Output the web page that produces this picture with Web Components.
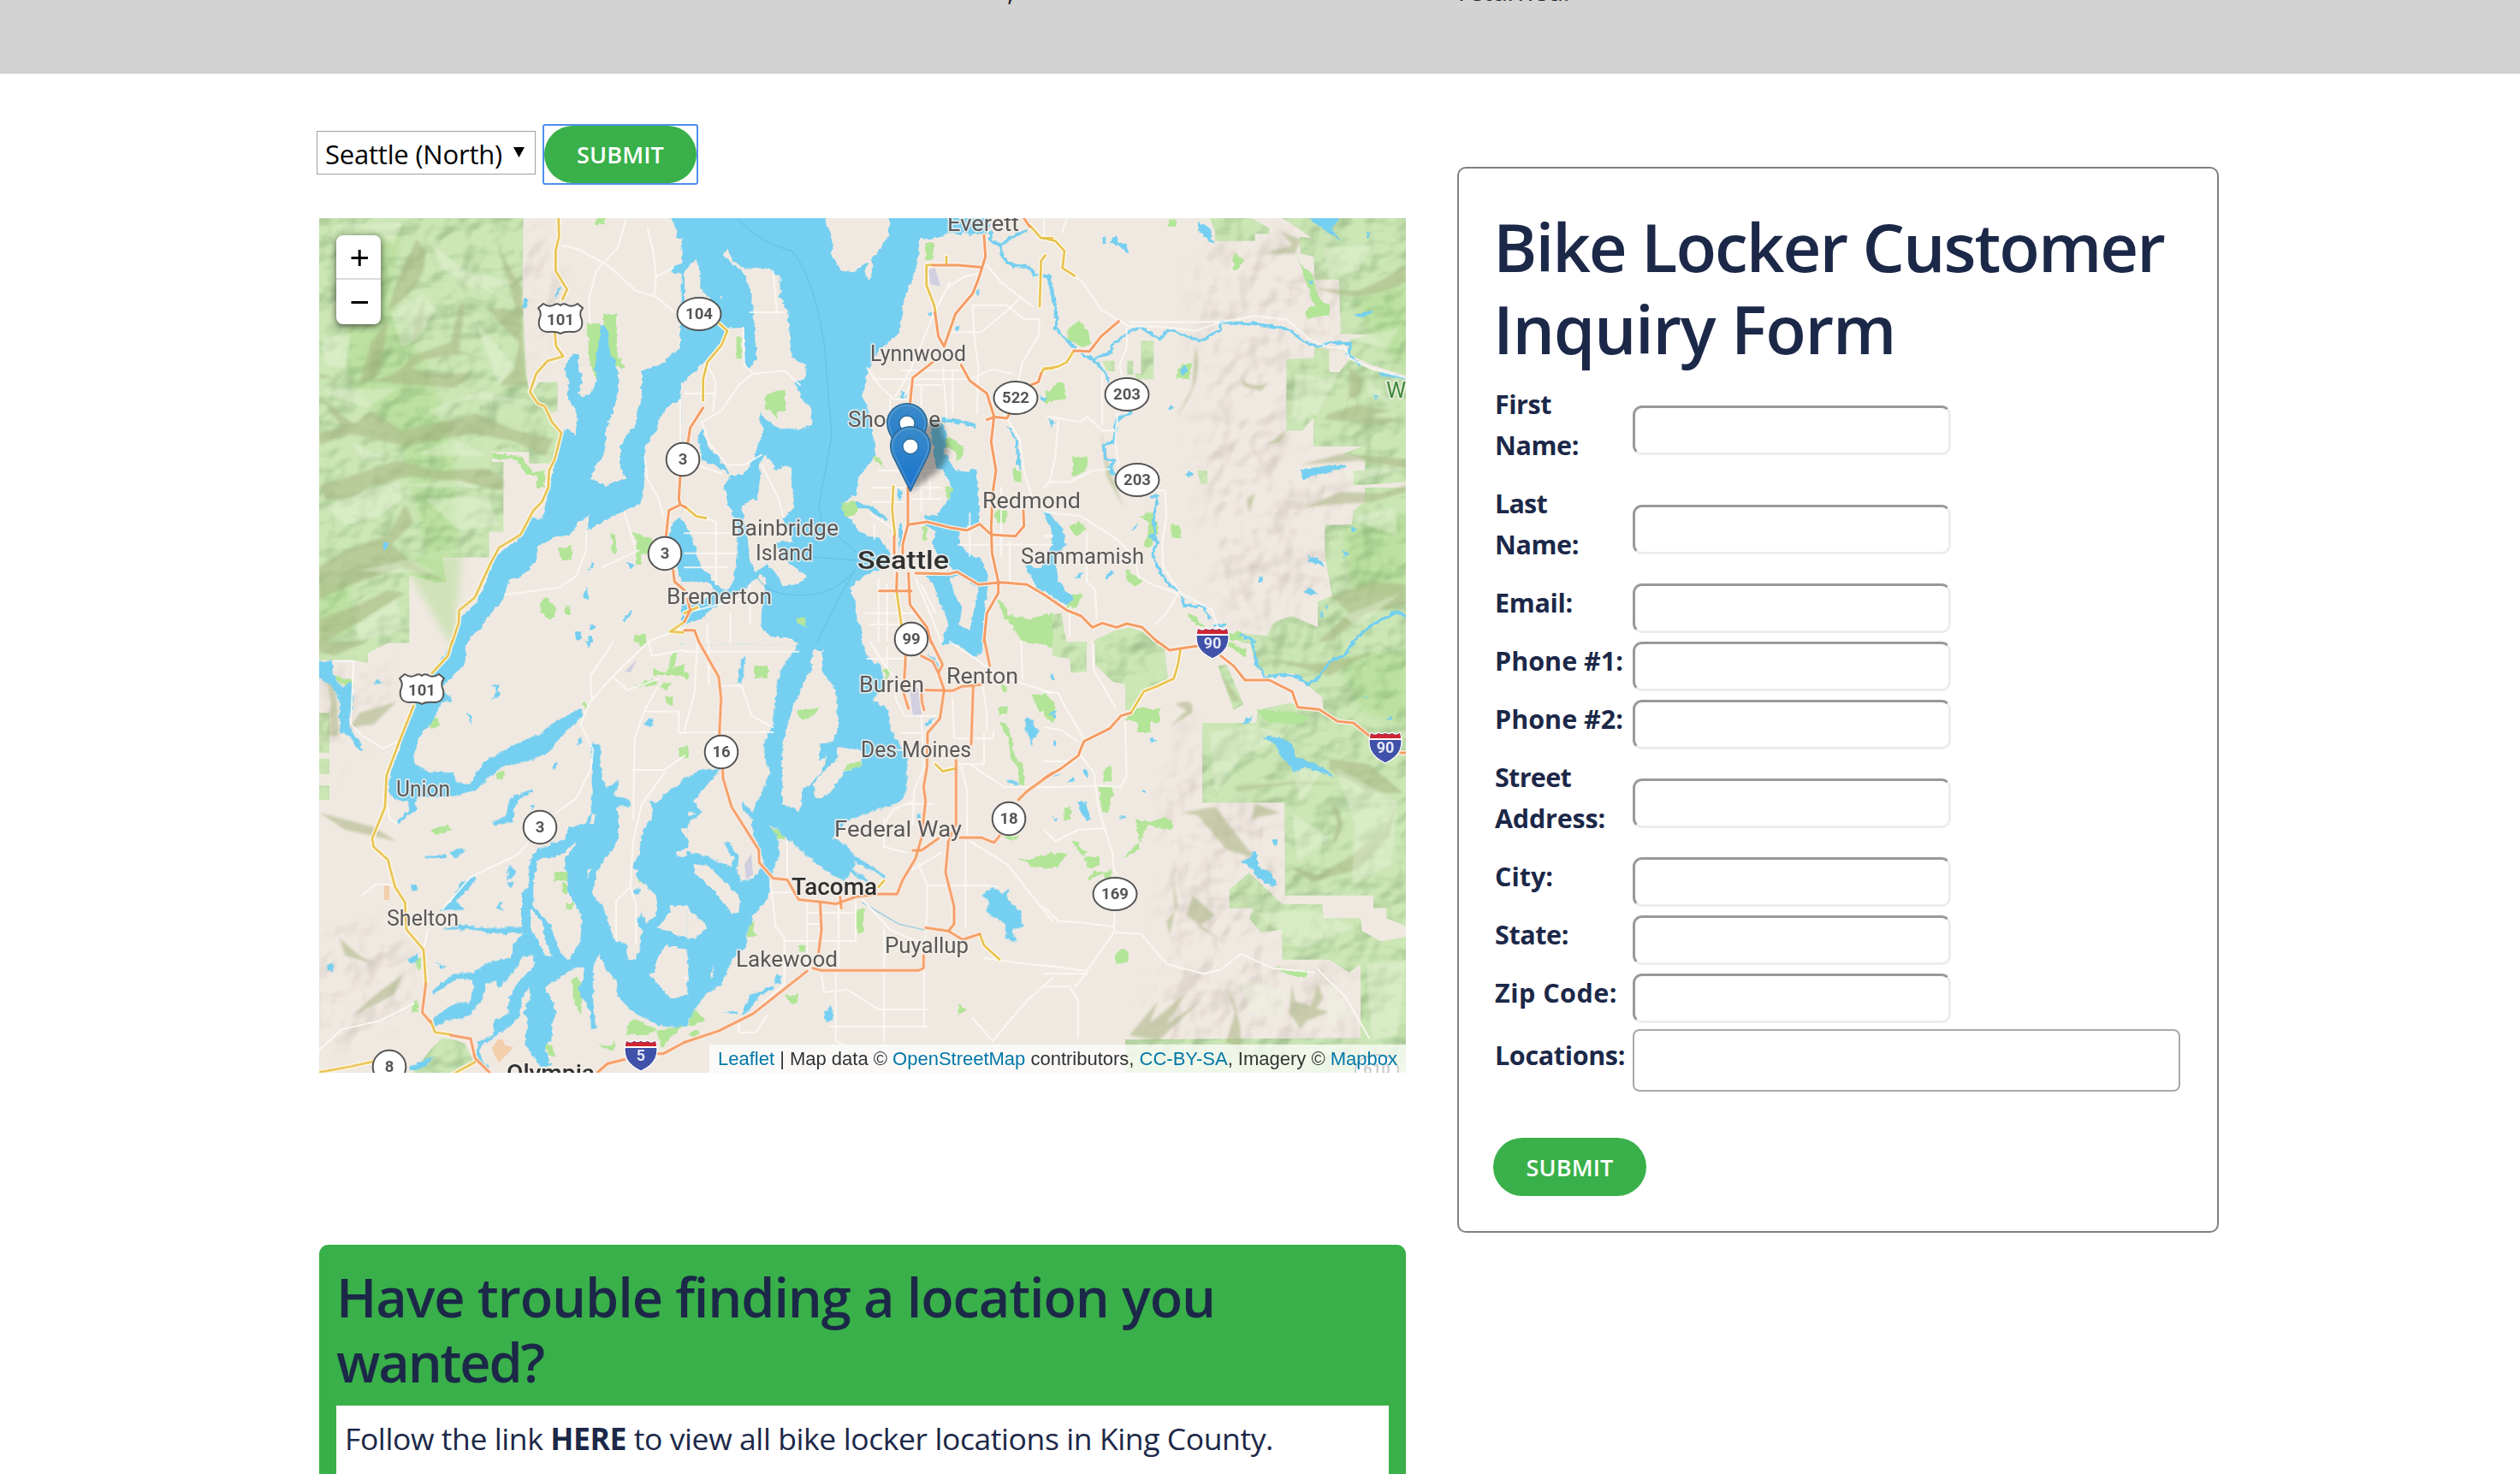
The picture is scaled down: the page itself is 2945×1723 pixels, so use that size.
<!DOCTYPE html>
<html lang="en">
<head>
<meta charset="utf-8">
<title>Bike Lockers</title>
<style>
html,body{margin:0;padding:0;background:#fff}
body{width:2945px;height:1723px;overflow:hidden;font-family:"Open Sans","Noto Sans",sans-serif;color:#1c2848}
</style>
</head>
<body>
<locker-page></locker-page>
<script>
const define=(name,html,setup)=>customElements.define(name,class extends HTMLElement{
  constructor(){super();this.attachShadow({mode:'open'}).innerHTML=html;}
  connectedCallback(){if(setup)setup(this,this.shadowRoot);}
});

/* Text whose letter spacing is adjusted to fill a given width. */
define('fit-text','<style>:host{display:inline-block;white-space:pre}span{display:inline-block}</style><span><slot></slot></span>',(el,root)=>{
  const s=root.querySelector('span'),w=+el.getAttribute('width');
  const natural=s.getBoundingClientRect().width,n=el.textContent.length;
  s.style.letterSpacing=((w-natural)/n)+'px';
});

define('pill-button',`<style>
:host{display:block;border:2px solid transparent;width:178px;height:67px}
:host([focused]){border-color:#4d90ee;border-radius:3px}
button{all:unset;box-sizing:border-box;display:flex;align-items:center;justify-content:center;width:100%;height:100%;border-radius:34px;background:#39b049;color:#fff;font:600 27px/36px "Open Sans";padding-top:1px}
</style><button><fit-text width="102">SUBMIT</fit-text></button>`);

define('location-select',`<style>
:host{display:flex;box-sizing:border-box;width:256px;height:51px;border:1px solid #a0a0a0;padding:0 12px 0 9px;align-items:center;justify-content:space-between;color:#000;font-size:31px;line-height:48px}
svg{display:block;margin-bottom:1px}
fit-text{padding-top:2px}
</style><fit-text width="207">Seattle (North)</fit-text><svg width="13" height="12"><path d="M0 0h13L6.500 12z"/></svg>`);

define('top-band',`<style>
:host{display:block;height:86px;background:#d3d3d3;overflow:hidden;box-sizing:border-box;border-bottom:1px solid #c9c9c9;color:#212529;font-size:31px;line-height:46px}
div{display:flex;margin-top:-34px}
i{font-style:normal;width:527px;margin-left:1177px}
</style><div><i>,</i><fit-text width="130">returned.</fit-text></div>`);

define('form-row',`<style>
:host{display:flex;height:68px;align-items:center}
:host([lines="2"]){height:116px}
label{display:block;width:161px;font-size:30.500px;line-height:48px;font-weight:700;white-space:nowrap;padding-bottom:14px;box-sizing:border-box}
input{all:unset;box-sizing:border-box;width:372px;height:58px;border:3px solid;border-color:#999 #ededed #ededed #999;border-radius:11px;background:#fff}
:host([wide]){height:77px}
:host([wide]) input{width:640px;height:73px;border:2px solid #a9a9a9;border-radius:8px}
:host([wide]) label{padding-bottom:14px}
</style><label></label><input>`,(el,root)=>{
  const parts=el.getAttribute('label').split('|');
  root.querySelector('label').innerHTML=parts.map(p=>{const [t,w]=p.split('@');return `<div><fit-text width="${w}">${t}</fit-text></div>`}).join('');
});

define('inquiry-form',`<style>
:host{display:block;box-sizing:border-box;width:890px;height:1246px;border:2px solid #808080;border-radius:10px;padding:43px 40px 0 42px}
h1{margin:0 0 10px -2px;font-size:78px;line-height:96px;font-weight:600;height:195px}
pill-button{margin:50px 0 0 -4px;width:179px;height:68px}
</style>
<h1><fit-text width="784">Bike Locker Customer</fit-text><br><fit-text width="470">Inquiry Form</fit-text></h1>
<div>
<form-row lines="2" label="First@66|Name:@98"></form-row>
<form-row lines="2" label="Last@61|Name:@98"></form-row>
<form-row label="Email:@91"></form-row>
<form-row label="Phone #1:@150"></form-row>
<form-row label="Phone #2:@150"></form-row>
<form-row lines="2" label="Street@89|Address:@129"></form-row>
<form-row label="City:@68"></form-row>
<form-row label="State:@86"></form-row>
<form-row label="Zip Code:@143"></form-row>
<form-row wide label="Locations:@152"></form-row>
</div><pill-button></pill-button>`);

define('help-panel',`<style>
:host{display:block;box-sizing:border-box;width:1270px;height:330px;background:#39b049;border-radius:11px 11px 0 0;padding:23px 20px 0}
h2{margin:0;font-size:63px;line-height:76px;font-weight:600;height:165px}
p{margin:0;background:#fff;height:150px;padding:12px 10px;font-size:35.500px;line-height:53px}
</style><h2><fit-text width="1027">Have trouble finding a location you</fit-text><br><fit-text width="242">wanted?</fit-text></h2>
<p><fit-text width="1085">Follow the link <b>HERE</b> to view all bike locker locations in King County.</fit-text></p>`);

define('zoom-control',`<style>
:host{display:block;position:absolute;left:20px;top:20px;width:52px;height:104px;border-radius:8px;background:#fff;box-shadow:0 2px 9px rgba(0,0,0,.65)}
svg{display:block}
</style><svg width="52" height="104"><path d="M0 51h52" stroke="#ccc" stroke-width="1.500"/><path d="M17.500 26.500h19.500M27.200 17v19M17.500 78.500h19.500" stroke="#000" stroke-width="3" fill="none"/></svg>`);

define('map-credit',`<style>
:host{display:flex;justify-content:flex-end;box-sizing:border-box;position:absolute;right:0;bottom:0;height:33px;width:814px;background:rgba(255,255,255,.72);padding:1px 10px 0 0;font:22px/32px "Liberation Sans",sans-serif;color:#333}
a{color:#0078a8}
</style><fit-text width="794"><a>Leaflet</a> | Map data © <a>OpenStreetMap</a> contributors, <a>CC-BY-SA</a>, Imagery © <a>Mapbox</a></fit-text>`);

/* Map geometry, in six tiles at three units to the pixel. */
const origin={A:[370,250],B:[800,250],C:[1220,250],D:[370,750],E:[800,750],F:[1220,750]};
const forest={
A:"M0,0H725L722,300 735,560 748,640 780,590H845V690L820,700 855,768 835,875H745V835H615V870H655V1115H605V1205H440L455,1290 420,1295 325,1265V1505H0Z",
D:"M0,0H260L180,40V75L130,65H0ZM0,250H45V390H0ZM0,410H45V465H0ZM0,505H45V555H0ZM400,1430L440,1390 480,1395 520,1410 550,1470 450,1520H330Z",
C:"M580,10L600,60 600,95H740V70H790V50L720,10ZM830,10H1275V570L1150,530 1065,490 1075,440 1140,425 1040,420 1035,230H950L945,150 900,140 895,80 940,85ZM850,510L945,505 950,465 1000,475V555H1035L1070,510 1150,545 1275,580V960H1125V860L1050,840 1120,815H945V715L905,760H850ZM1275,940L1125,950V1010L1085,1040 1080,1090H985V1200L1010,1340 960,1360V1450L870,1410 810,1430 780,1480 690,1470V1505H1275ZM0,1410L60,1400 80,1505H0ZM185,1490L250,1460 300,1450 345,1465 390,1505H170ZM1085,900H1130V950H1085ZM340,445H385V580H320V560H340ZM205,515H247V552H220ZM292,515H313V565H292ZM538,900H573V948H550Z",
F:"M30,0H150V105L95,110 90,60 30,50ZM180,0H420L435,130 350,170 300,240H285V150L240,140 180,80ZM720,0H1275V1000L1200,970V935H1155V890H845L843,565H555V285H745L750,240 860,215 980,240 975,195 870,110 790,125 745,90ZM650,870L720,810 835,920H975L980,970H1110L1115,1015 1180,1050 1275,1035V1510H1140L1110,1415V1130L1070,1160 1000,1115H835V1010L760,1020 720,970 735,935H650ZM285,1395L1110,1390V1520H285ZM610,85L640,80 700,220 665,240Z"};
const park={
A:"M980,15h32v22h-32ZM1005,350h48v140l30,55-30,-10-40,-60ZM947,385h50v150l-15,45-25,-50ZM615,840l100,10 45,55 40,-5v60h-30v-40l-40,-10-30,-50h-85ZM1100,1115l75,20v60h-38v35h-17v-90ZM845,1175l50,-15v55h-35ZM785,1350l20,-5 40,45-25,35-35,-30ZM1115,1475h40v25h-40ZM870,1375h20v30h-20ZM1035,1110l18,40-5,50-15,-20Z",
B:"M845,100l30,5-5,55h-25ZM182,430h18v78h-18ZM285,630l68,-15v75l-25,5-5,25-12,-25-30,-10ZM545,1020l50,-15 15,40-40,20ZM660,860l20,-10 20,40ZM915,785l30,5 40,40-30,40-5,-40-35,-10ZM1150,895l30,5 5,45-30,-10ZM915,955l28,5-10,35h-15ZM1090,1040h40v42h-40ZM1265,620h25v40h-25ZM388,1415h40l-10,35ZM130,1455l25,-5v40h-25ZM1190,1430l60,-20 40,-10v100h-105l-50,-75ZM1095,1350l20,5 20,50 80,20-20,10-70,-10ZM835,1095h15v50h-15Z",
C:"M435,20h30v25h-30ZM665,135l40,25-30,35h-12ZM885,130l15,50 40,30 20,80 40,30v35l-80,10v-35l30,-10-50,-130ZM85,400l35,-25 30,30 15,50-30,10-50,-20ZM480,530l35,-5-5,55-50,-5ZM20,620l35,-35 20,15v45l-65,15ZM100,850h52l-5,50-45,25ZM90,1095l30,-15 32,20-40,35ZM443,1090h35v45h-30ZM290,1245l55,45-25,15-30,-20ZM335,1060l45,-15 25,60-35,70-20,-10 20,-80ZM500,1400l30,10 35,40-35,-10ZM650,1470l45,-5v30h-45ZM100,1340l35,-10-20,50-40,5Z",
D:"M55,120l70,15v30h-20l-15,-15ZM390,290l10,-20 25,-3 3,30-25,10ZM628,465l28,-15v33h-25ZM400,660l60,-20 12,20-55,18ZM835,808h45v30h-45ZM860,840l20,15v30h-20ZM875,915h25v22h-25ZM1115,0h45l-20,20ZM1115,160l60,-30 20,15-25,15ZM1180,95l50,15 15,-65 20,-10-15,60 40,-15v40h-110ZM1205,150l45,-10-25,35ZM1222,190h25v40l-20,-15ZM1270,370l20,-5v45l-20,-10ZM345,1110h20v45l-20,-20ZM335,1280l20,-25v45h-20ZM1085,1350l30,-30 75,40-30,20h-70ZM990,1410l40,10 15,-25v40l-30,-5ZM800,1415h30l5,40h-20ZM895,1190l20,-15 20,40-10,90-20,-30ZM1190,1365l100,-20-50,40-30,40ZM1130,830h28v17h-28ZM930,220l20,-10-5,30Z",
E:"M245,82h46v46h-46ZM0,105h12v25h-12ZM0,365h14v40h-14ZM390,240l80,-10-10,25-45,20ZM700,95h22v20l-15,20ZM555,455l20,-30 45,-5-5,20ZM290,640l65,40-5,15-35,-10ZM605,945l25,-15-5,90-15,5-10,-50ZM230,975l15,5-5,35 15,20h-35ZM350,1235l25,10 20,-10 5,30-30,5ZM960,1270l28,20-28,25ZM10,1345l20,-60 40,40-25,20ZM10,1380l25,-20 20,15-30,10ZM1185,0h105v20ZM1215,185h52v60h-25ZM1100,230h32v25h-32ZM1110,150l20,5v25h-15ZM1105,280l20,5 15,30 10,60 20,50h15l10,75h-20l-5,-60-25,-25-10,-80-20,-20ZM1170,760l40,5 80,-25v50h-75ZM1120,680h50v12l-35,5ZM395,1065h28v20h-20Z",
F:"M300,240l50,-10 55,8v45h-32v35h-45v-35l-40,-10ZM205,455l32,-25v60h-30ZM190,510h50v30l-15,60h-20ZM325,625l40,5 60,-15 30,25-10,20-80,-15-25,50-40,40-60,60-15,60-15,-40-60,20 25,-30 50,5 50,-50 60,-30ZM140,755h55v30l-40,10ZM95,700h30l-5,20 35,20-20,10ZM0,750l80,-10-30,50-50,10ZM0,180l40,35-5,70-35,-20ZM650,0l60,30v25l-65,-40ZM745,240l120,5 65,20-30,25-120,-10ZM250,1100l25,-20 22,10-5,35-40,5ZM812,1138l50,17h65l-10,22-65,-7ZM72,580h22v45h-25Z"};
const water={
A:"M1300,10H1240L1265,60 1260,85 1283,90 1280,175 1245,190 1250,208 1300,205ZM905,490L920,500 918,545 932,560 928,590 918,635 935,642 965,625 985,585 975,540 985,480 995,390 1005,385 1022,420 1025,475 1045,510 1058,560 1055,640 1040,690 1015,750 1012,830 1000,855 975,890 963,930 1010,955 1050,940 1085,925 1065,890V820L1085,780 1118,745 1125,690 1140,640V560L1150,545 1200,535 1235,500 1275,470V370L1300,360V590L1275,650 1240,670 1205,710 1190,760 1150,820 1148,970 1135,1015 1050,1055 950,1110 955,1060 915,1080 890,1125 840,1135 775,1165V1210L740,1250 710,1275 675,1280 655,1350 610,1400 570,1460 540,1480 530,1505H478L510,1410 555,1370 600,1280 625,1200 700,1150 755,1065 795,1070 800,1030 820,940 830,890 860,765 885,755 908,780 912,705 880,640 885,600 870,540 890,500ZM1235,1130L1250,1080 1270,1065 1300,1090V1290H1280L1265,1250ZM835,290l10,-30 15,-5-15,35ZM727,290l12,10-5,30h-10ZM235,1150l22,5-15,25h-10ZM935,1345l10,-40 12,55ZM1070,1430l30,-45 5,15-25,32ZM1085,1220l32,10-15,15ZM950,1250l15,-25 8,10ZM905,1468h25v25h-20ZM955,1435l28,15-20,10ZM953,1480h16v20h-16Z",
B:"M-10,10H1075L1060,72 920,70 860,90 825,88 815,180 790,250 770,300 760,360 750,420 700,460 660,510 640,560 625,640 645,690 665,800 670,850 610,920 600,990 570,1000 550,1025 580,1070 620,1120 680,1140 715,1180 725,1230 660,1255 600,1290 580,1310 600,1370 605,1420 625,1460 620,1510H-10ZM860,725L905,735 920,770 912,840 950,900 990,905 1020,890 1028,950 1035,1085 975,1100 960,1115 965,1160 1000,1195 1040,1210 1065,1280 1055,1380 1045,1510H905L925,1430 900,1380 870,1300 845,1270 950,1250 900,1220 870,1160 880,1110 850,1095 840,1060 885,1055 920,1010 940,970 905,900 880,880 870,800ZM900,715l60,5 60,15 5,15-60,-15-60,-5ZM598,1010l60,15 55,45-5,8-60,-40-55,-10ZM745,965l20,5-15,40ZM760,620l18,10-10,18-12,-5ZM1020,270l18,-5-10,25ZM945,400l20,-10-10,28ZM1130,740l20,20 20,40 10,100-15,-20-5,-90-25,-40ZM750,1100l12,-20v60l-10,40ZM1245,640h22v18l-20,-5ZM850,345l20,5-10,8ZM1190,1230l25,10-10,20Z",
C:"M-5,1040L20,1050 70,1110 75,1165 40,1200 50,1290 105,1350 80,1370 40,1350 0,1320 -15,1250 20,1180 30,1120ZM-60,1230L0,1250V1330L-25,1320ZM540,25L580,50 598,105 580,95 540,55ZM230,100l20,-25 10,20 30,15 8,28-45,-30ZM206,82h12v25h-12ZM925,10H1040L1010,55 1040,95 980,55ZM903,895L1058,878V888L905,930ZM925,1200l35,5 25,30-60,-15ZM910,1325l20,-15 30,20-20,10ZM1090,355l40,-15 25,5-50,20ZM495,912l15,-12 14,14-14,12ZM475,548l22,-14 5,16-15,18ZM18,718l25,13-20,15ZM436,680l10,-15 7,20-10,5ZM310,1110l15,-27v18l-12,16ZM105,1275l35,-18-15,22ZM215,1275l15,-22 18,0-28,27ZM755,1270l12,3v17h-12ZM1130,65l15,5-8,18ZM1045,1180l25,12-15,15ZM1075,1100l20,5-10,12ZM1155,630l15,8-8,15ZM985,1370l15,10-8,8ZM970,1400l8,-5v20h-8ZM925,230l20,5-8,15Z",
D:"M475,-5H527L520,80 440,160 475,205 440,215 400,290 370,320 340,400 345,430 385,455 480,460 485,495 535,500 580,430 640,390 720,350 790,320 830,285 905,245 925,235 935,260 860,330 800,400 720,425 650,440 600,480 560,520 500,540 350,550V590L320,610 285,640 280,630 325,590 320,560 270,550 250,520 260,460 290,380 310,290 345,220ZM0,68H55L60,120 90,160 120,140 130,200 115,300 155,360 160,380 145,378 115,325 82,320 80,210 60,160 0,120ZM965,355L995,360V430L1005,490 1020,510 1060,485 1045,540 1100,560V578H1055L1060,670 1040,730 995,780 965,880 1010,940 1040,1040 1090,1065V1115L1115,1118 1135,1070 1140,1010 1120,980 1140,950 1155,990 1195,950 1190,890 1150,850 1120,830 1125,800 1105,795 1130,740 1145,660 1180,610 1170,555 1190,570 1225,530 1300,485V1350H1220L1180,1340 1100,1290 1055,1240 1050,1190 1010,1140 990,1095 970,1140V1290L980,1355H962L960,1300 915,1215 940,1180 935,1140 900,1145 850,1180 800,1210 825,1260 840,1300 825,1340 830,1380 800,1430 825,1490H785L730,1410 740,1330 725,1300 750,1250 745,1210 715,1260 710,1320 650,1370 600,1400 570,1430 580,1470 610,1495 580,1490 560,1450 565,1400 620,1380V1330L670,1310 675,1250 700,1200 765,1130 755,1100 725,1105 690,1160 635,1220 630,1190 590,1200 585,1250 540,1310 460,1330 410,1350V1320L470,1275 540,1260 550,1190 490,1180 410,1240V1220L480,1165 550,1160 600,1125 680,1110 690,1060 725,1020 600,1028 570,1010H440L500,990 600,1005 720,1000V880L745,860V770L770,730 870,690 885,650 940,640 965,590ZM435,945L480,900 500,850 550,825 560,835 490,910 520,940ZM615,635l50,-25 10,-60 80,-35 5,10-50,25-20,50v30l-60,15ZM380,755l75,-10v15h-70ZM470,740l25,-15 28,8-40,28ZM330,855l20,-5 5,20-20,5ZM670,785l25,10 0,25-25,15ZM665,850l28,-10-10,25ZM630,935l20,-25v35ZM320,1115l40,-25-10,35-25,5ZM418,1125l35,15-15,5ZM35,1135l20,-10 3,35-15,-10ZM200,150l15,-15 25,10ZM615,155l28,-5-10,25ZM612,205l25,-35 5,20ZM530,250l18,12-8,25ZM825,445l10,-20 15,0-15,25ZM910,370l15,-40 10,20ZM1150,290l15,-25 18,5-10,30ZM1110,870l20,-10v25l-15,5ZM325,1490l40,-15 45,-25-10,25-50,28h-25ZM945,0h20l-10,25ZM745,570h20l-10,20Z",
E:"M405,-5H618L640,50 690,90 700,150 660,205 715,240 725,310 755,360 780,410V530L750,565 640,600 570,630 520,690 560,710 590,740 600,780 560,840 520,820 440,760 360,690 300,640 330,700V750L300,830 295,900 240,960 220,1020 215,1070 170,1110 130,1200 70,1240 0,1345H-10V1040H40L80,1000 30,950 0,920H-10V735H0L70,750 165,790 170,760 140,710 150,700 190,750 185,810 200,840 240,830 280,780 260,720 240,680 235,620 200,580 205,560 240,600 270,530 300,460 280,400V350L310,290 320,190 330,120 360,60ZM-10,485L60,450 130,445 90,490 30,560 60,600 0,650H-10ZM185,145l15,-85 12,-5-10,90ZM940,-5h108l-10,50-30,5ZM1195,270l25,0 5,25 22,20-20,20-10,30-20,-55ZM1040,890L1080,860 1110,880 1140,870 1130,900 1180,950 1185,1000 1150,1010 1165,1050 1125,1045V990L1060,950 1070,910ZM200,1310l30,-70 80,-35 5,15-50,20-45,60ZM316,1172h22v30h-22ZM492,1300l25,-25 5,50-25,10ZM135,1300l45,-5 5,12ZM1130,480l45,15-15,10-20,-5ZM845,285l30,-20-10,25-20,8ZM850,40l30,20 15,35-10,0-20,-35ZM570,790l75,45-8,8-72,-42ZM592,750l115,70-5,10-110,-65ZM815,605h15v15h-15Z",
F:"M695,290l10,-20 28,-8-10,20ZM765,332l60,5 50,20 5,45 80,30 50,30-5,10-90,-30-35,15-55,-60-10,-35ZM690,770l35,-15 10,-25 15,20v40l45,20 22,45-15,5-50,-30-30,-40ZM802,690l15,0v22h-12ZM115,562l35,0 12,60-15,5-20,-40ZM25,110l12,10v15h-12ZM370,345l12,-12 8,15-15,8ZM340,530l10,-12 12,14ZM265,613l25,2-15,5ZM140,445l17,10v18l-15,-5ZM80,495l20,-17 10,10ZM30,345l15,5v22ZM28,615l22,5-5,15ZM20,250l25,-10-8,28ZM1118,192l22,0-10,8ZM1200,268l20,-5v12ZM32,472l30,-10-20,12Z"};
const isle={
B:"M0,200L40,160 55,200V260L100,310 60,400H0ZM125,295L135,290 130,300ZM-10,595L50,540 80,510 130,450 150,400H210V520L225,545 250,510 245,390 235,290 215,220 190,190 165,180 135,140 155,120 165,165 210,190 300,195 335,220V290L360,340 370,430 375,500 425,530V580L385,590 410,650 440,680 450,740 400,755 330,750 300,730 275,710 265,690V740L280,755 250,830 245,860 200,915 165,915 115,850 85,820 60,750 48,790 60,860 110,885 165,915 140,950 150,1010 165,1050 185,1090V1200L170,1290 145,1325 110,1300 90,1270 60,1240 30,1150 0,1080H-10ZM285,845L315,880 320,905 345,885 375,890V960L385,1025 345,1070 365,1110 380,1150H320L340,1200 430,1275 395,1300 345,1305 320,1260 290,1230 245,1255 230,1210 215,1100 200,1025 240,1000 255,1010 265,920 260,880ZM490,10L520,90 515,140 550,200 600,205 625,180 640,170 630,215 650,235 660,200 655,160 680,130 715,80 720,10ZM-10,1290H80L110,1320 60,1360 0,1370ZM-10,1445L60,1420 90,1390 150,1350 190,1330 265,1265 285,1275 280,1320 270,1400 265,1450 300,1480 380,1490 400,1510H-10ZM930,1275L965,1270 1000,1290 1030,1310 1020,1370 1000,1460 960,1440 970,1380 940,1320Z",
D:"M775,765L850,750 915,700 870,765 880,830V870L930,970 925,1050 880,1120 850,1080 820,990 760,930V850ZM750,940L790,980 805,1060 825,1105 800,1100 775,1050 750,1000ZM1240,925H1300V1040L1195,1005 1235,950ZM1225,1065L1300,1080V1240L1240,1250 1165,1165 1190,1160 1185,1130ZM965,600L980,605 970,640H960ZM948,800l15,-5-10,35ZM1280,655h20v35h-10ZM1262,740l38,-20v35h-30Z",
E:"M450,30L485,30 480,100 530,170 540,300 520,350 475,360V420L500,400 480,460 440,500 415,520 405,595 345,570 340,370 380,230 430,120 445,100ZM535,370L620,380V430L560,460 500,540 460,550 450,500 500,440 540,410ZM30,780L80,785 150,850 195,900 190,950 165,955 100,870 35,810ZM10,600l20,-5 8,10-25,4ZM-10,1090H8L15,1190H-10ZM90,1170l10,-30 3,25-8,20Z"};
const stream={
B:"M1075,65L1070,95 1110,110 1115,155 1150,180 1205,185 1230,215 1275,220 1290,290M1110,110L1150,80 1195,60",
C:"M0,215L20,220 35,300 45,370 40,400 80,445 110,470M130,490L170,510 235,485 240,460 310,405 345,400 405,440 435,405 545,445 615,410 620,380 740,385 860,405 905,445 960,465 1010,450 1075,455 1065,490 1105,525M1180,560L1265,575M180,515L215,560 228,590M305,695L255,720 245,800 208,810 215,860 250,865 230,890 245,915M375,990H400L385,1060 390,1130 370,1130 400,1150 380,1190 400,1240 430,1290 465,1320M485,1345L490,1375 560,1375 580,1420M600,1445L635,1440M690,1475L740,1500M1080,1500L1150,1440 1240,1395 1269,1415",
F:"M730,0L745,80 780,125 830,115 890,125 930,150 965,125 1000,70 1050,50 1085,5"};
const white={
A:"M860,110L920,125 1020,180 1120,270 1190,290 1255,345M1085,20L1055,120 980,200 955,300 958,380M1160,50L1180,130 1190,220 1185,280M1190,220L1250,190M660,1335L740,1325 850,1310 910,1270 945,1180V1110M1150,850L1160,930 1200,1000 1215,1060M1000,1240L1130,1180M1080,1050L1120,1180M1160,1500L1290,1450M1275,650V800",
B:"M205,400L210,530 240,560 350,550 405,600M240,560L190,600 130,690 60,730 90,810 150,880 210,880 270,845M0,630H110M80,530L110,590 100,690M230,345H350M310,200L325,350M270,880L330,1000 345,1060M60,1060L110,1080V1300M0,1120H180M0,1190H180M0,1240H150M10,870L130,910M640,540L690,610 735,650H800M800,580L770,640M660,580H1000L1080,545 1150,560M930,240L870,360 800,530 740,640M1030,210L980,220 920,260M1010,320H1130L1190,370H1245L1240,430 1185,520 1170,590M1010,320L1015,420 1030,540 1025,700M1060,180L1110,240 1220,325M925,415H1040L1130,340 1180,290M905,540L920,720M940,550V700M830,600V700M790,600H900M760,550H990M1175,790L1190,900 1220,1000M680,900H770V870M660,960H770M660,1010L770,1010M650,1050L740,1110M800,900H900M830,880V1040M860,920V1000M800,960H900M800,1000H900M665,1090V1140M960,1160H1290M1000,1050V1200M1120,700L1180,800M1110,960V1200M1140,1150V1290M810,1280L860,1400 900,1500M680,1280V1500M630,1400H800M710,1300V1500M650,1440H760M830,1300L880,1400M720,720H800M720,650V780M0,1400L200,1350M80,1440V1500M160,1400V1500M230,1300V1440",
C:"M108,217L140,245 200,335 300,395 400,395 530,410 620,380 740,358 850,370 930,440 1000,468 1055,468 1070,505 1140,540 1269,575M300,380H530L620,378M290,400V470L265,530 275,575M258,700L250,800 262,880M390,970L425,970 430,1060 415,1150 418,1240 480,1330 590,1390 610,1450M0,1045L130,1060 240,1130 320,1200 330,1270 380,1300 470,1330M10,710L130,730 150,710 205,760H250M50,730L40,850 20,940 0,960M20,940L90,940 170,900 230,895M150,1120V1290L180,1320 185,1420M90,1380V1480M470,1330L430,1400 390,1440M0,10V80M80,15L65,60M205,560V740M0,1130H30",
D:"M1165,0L1040,120 960,210 925,290 970,380 960,450 910,550 840,600M740,710L700,750 540,825 440,940M390,1010L375,1080M60,68H130L120,290 160,330 235,375 280,350M1040,0L960,120 965,200M1040,125L1090,170 1200,130M1195,160L1150,240 1115,340 1110,620M1150,245H1270V320H1290M1110,450H1220L1290,400M1220,460L1140,570 1110,700 1100,860 1120,920V1060M1100,860L1050,910V1050M1165,0L1175,50 1290,30M10,1430L90,1360 220,1330 340,1270M160,890L210,850 270,855M250,580L255,620 285,640",
E:"M0,35H400M45,0L35,180 0,310M0,318H310M125,155H200L235,260 310,300M85,0V150M650,0L700,80 740,130V200L770,260H880M640,60H790M710,20V90M830,260L840,440 805,520 800,640M760,320H840M745,380H840M940,200L945,340H1080L1085,310M1045,150L1060,250V310M930,0L1020,60 1100,120 1290,180M1180,0L1185,130M1050,320V430H950M1000,430L1120,510H1290M970,440L990,520V680M780,570H870M700,640L730,590 800,560M700,620V720L780,740M820,780L850,850V950L840,1090M985,690V1000M1000,700L1130,780 1210,880 1290,980M800,800L900,740M530,1150V1400M300,840L320,1000 350,1040V1200L240,1300M310,880H400M430,900V1150M430,950H600M430,990H470M540,930V1150M600,900V1050H350M480,1170L490,1230 570,1220 680,1290H850M840,1100V1350M510,1350H850M700,1010V1400M350,1050H480M620,900L720,1010 840,1060M1050,1110L1200,1130 1290,1140M0,1180H8M850,855H1050L1100,860M190,1330V1370L250,1370 290,1310M360,700V830M1010,1320L1080,1400 1200,1260 1290,1180M530,1400L570,1420",
F:"M0,177L50,180 75,230 140,340M130,400L175,460 190,580 240,740 245,800 255,815M248,945L245,1020 150,1155 0,1135M250,1020L340,1025 430,1130 560,1165 620,1150 690,1095 800,1145 950,1160M0,512L180,505 270,510 290,470 285,280M960,1150L1060,1250 1140,1390M0,300L60,310 120,350M0,420H110M170,0L175,100 250,230M0,660L40,700 120,660 210,655M0,930L50,980 130,985 240,1000M0,1210H90L120,1260V1390M150,1160L110,1210M0,1165H150M490,20H540"};
const orange={
A:"M1275,920L1270,1000 1275,1020 1235,1040 1225,1130M1250,1250L1255,1290 1290,1320M1275,1020L1295,1030",
B:"M1050,75L1055,150 1030,230 1010,280 950,350 910,465 890,430 878,345M870,180L960,180 1035,187M870,520L800,575 790,670M970,530L1000,585 1060,630 1085,710 1075,800 1092,900 1080,980 1075,1100 1078,1190 1100,1290V1330L1060,1400 1050,1500M1060,722L1085,712 1130,717 1140,700M1215,600L1240,590 1250,560M783,960V1090L765,1160V1190M785,1090L850,1080 930,1100 990,1110 1035,1088 1075,1125 1160,1130 1190,1095 1188,1040M810,1260L930,1262 955,1255 1030,1300 1110,1292 1200,1300 1260,1335M785,1260L790,1370 850,1450 865,1505M745,1260L743,1320M683,1322H795M735,1190V1130M65,680L20,750 12,800M1190,15L1210,45M0,1460H35L50,1500M10,1350L20,1390 0,1430",
C:"M105,480L160,482 200,430 262,377M0,1335L80,1390 130,1410 170,1450 205,1435 255,1450 290,1437 345,1450 400,1503",
D:"M383,1200L370,1300 400,1335M470,1380L540,1392 555,1460 610,1515M985,1510L1020,1480 1080,1465M1195,1445H1215L1290,1405",
E:"M50,0L120,125 128,200 122,325M133,440L135,480 165,580 260,730 262,775 310,830 360,835 400,905 475,912 530,920 600,895 680,885H745L765,835 810,760 830,690 845,560 838,510 850,440 852,320 895,270 910,170 890,110 905,80 865,0M830,50L870,70 890,110M775,50L768,180 785,235M830,150L832,210 840,240M845,170L940,172 970,158 1040,150M1070,85L1052,-3M1012,155L1005,360M952,415V640L925,700 915,810 945,930V990L925,1015 845,1003M925,1015L975,1045 1035,1025M475,912L480,1010 470,1090M450,1145L480,1153H820L838,1145V1100M430,1155L240,1305 120,1365 0,1405M800,732H830L890,690M965,687H1040L1085,705 1105,680M1170,555L1200,525 1290,460M545,895L550,935",
F:"M0,480L60,445 120,400 140,350 230,305 270,260 305,250M395,-3L440,30 540,15M620,50L665,85 705,135H790L870,175 890,230 965,238 1030,280 1085,285 1140,330M1250,390H1269"};
const yellow={
A:"M848,15L850,80 838,130V200L878,265 862,300M835,415L840,465 865,500 810,515 770,560 748,625 775,665 800,675 825,730 858,768 835,860 815,900 812,960 790,1010 760,1040 715,1125 640,1170 610,1225 555,1345 500,1390 498,1435 475,1503M1290,1430L1240,1465 1285,1468",
B:"M122,385L150,410 130,460 80,520 65,580V655M0,1025L40,1060 75,1067M732,955L728,1040 738,1130M870,178L848,180V250L875,320 880,345M918,150V180M1210,40L1250,85H1290M1265,145L1250,165 1245,325M1250,560L1260,542H1290M743,1320L760,1440M0,1400L45,1380",
C:"M0,85L40,95 72,130 65,190 108,217M0,545L50,535 80,520 105,480",
D:"M475,-3L460,50 405,110M340,225L290,350 245,470 240,580 195,690 200,720 250,765 275,860 310,915 315,1010 375,1080 383,1200M400,1330L415,1370 470,1378M10,1510L120,1490 200,1472M480,1515L555,1475",
E:"M1035,1025L1050,1065 1105,1115M880,430L905,455 950,445M680,860L700,838",
F:"M305,250L350,175 400,155 455,130 470,80 478,30"};
const ridge={
A:"M350,90Q400,130 370,210Q330,290 250,340L280,240ZM10,560Q120,600 210,580T330,500L470,450 500,320 520,310 500,480 620,520 510,490 380,510 330,540 420,560 540,560 490,610 330,600 240,590 10,575ZM640,120Q680,200 720,260V460L640,380 600,330 700,340ZM10,770L130,740 190,690 300,760 480,720 560,700 700,760 830,790 800,850 700,800 560,770 480,780 320,815 200,790 120,770 10,810ZM10,950L150,910 280,865 420,900 600,895 655,930V970L500,940 330,920 200,950 120,1000 30,1000ZM10,1240L120,1170 250,1130 310,1020 340,1080 260,1160 350,1230 450,1290 300,1240 150,1290 10,1350ZM10,1420L150,1370 250,1320 310,1330 150,1430 30,1500H10ZM720,420L735,600H640L690,540ZM250,370L225,560 150,600 190,450ZM380,290L370,400 330,480 350,360ZM10,640L120,730 200,760 90,750Z",
C:"M950,260L1100,270Q1200,230 1269,180V240Q1150,300 1040,285ZM1000,700L1100,670 1220,690 1120,710 1269,720 1180,740 980,720ZM900,880L1050,840 1269,860V890L1100,865ZM910,1030L1040,975 1180,980 1269,950V975L1150,1010 1000,1020ZM1010,1340L1150,1290 1269,1300V1370L1130,1400 1000,1500H960L1070,1400ZM830,60L900,90 880,140 770,140 870,110ZM1070,540Q1150,580 1090,650L1070,640ZM690,570Q720,620 790,590L760,620 700,605ZM780,810L850,760 830,800ZM530,460Q560,560 500,660L460,720 520,610ZM710,1000L720,1050 740,980ZM200,760L230,900 280,1030 220,920Z",
F:"M760,60L950,80 1150,40 1000,120 860,80ZM1000,410L1140,430 1260,530 1150,530 1000,450ZM670,510L900,490 1050,500 860,500 680,525ZM480,600L600,580 740,760 640,730 540,610ZM740,570L830,600 730,620ZM1010,560Q1080,640 1010,710L1030,640ZM850,780L960,820 1080,750 1200,650 1240,560 1210,680 1100,800 940,840ZM640,1210Q700,1320 690,1440L640,1400 670,1300ZM870,1200L880,1260 1000,1300 920,1330 960,1200 980,1250 900,1360 860,1300ZM430,980L470,930 450,820 460,940 440,1030ZM520,890L600,960 540,1000 640,1060 500,960ZM300,1380L400,1260 370,1340 500,1230 430,1340 550,1260 400,1400ZM460,220Q530,190 520,250L440,300 500,240ZM620,110L690,210 660,210Z",
D:"M0,0H180L60,50 0,30ZM150,250L280,210 200,290 120,300ZM10,600L200,650 280,700 100,660ZM80,1040L150,1100 200,1130 100,1100ZM230,1220L300,1170 270,1240 130,1310 180,1260ZM30,90Q80,150 75,330L40,330 50,220Z"};
const sheen={
A:"M400,100L520,200 700,240 600,260 720,330 540,240 610,300 440,190ZM260,350L370,280 420,330 350,440 300,470ZM20,440L120,420 100,540 30,530ZM560,380L700,540 640,600 600,500ZM20,620L290,610 180,680 60,640ZM390,690L580,620 740,660 500,650 440,720ZM120,800L200,840 270,850 160,860ZM310,950L500,930 580,960 380,960ZM30,1030L200,960 290,940 300,1000 220,1060 100,1090ZM380,1000L600,990 640,1090 500,1110ZM150,1250L330,1210 420,1260 250,1260ZM30,40L300,30 270,110 200,50ZM130,1450L280,1350 300,1460 160,1495ZM350,840L480,790 600,850 420,850Z",
C:"M980,120L1150,110 1100,200 1000,220ZM1060,440L1250,400 1200,470ZM880,560L1000,580 1040,540 960,700 870,740ZM1130,580L1220,660 1140,640ZM1030,900L1269,890 1080,940ZM1100,1060L1230,1030 1240,1130 1100,1080ZM1050,1410L1250,1330 1100,1450Z",
F:"M580,320L740,290 850,330 700,400 600,520ZM860,420L980,450 900,560ZM1020,440L1240,560 1220,780 1080,850 1090,640ZM870,600L1000,690 890,770ZM740,950L940,940 1090,1000 900,1080ZM1130,1130L1269,1120 1240,1380 1150,1400ZM690,1180L850,1230 830,1330 720,1300ZM1000,1200L1080,1310 990,1350Z"};
const tiles=(set,attrs)=>Object.entries(set).map(([k,d])=>`<g transform="translate(${origin[k]}) scale(.33333)"><path d="${d}" ${attrs}/></g>`).join('');
const places=[["Everett",1107,270,84],["Lynnwood",1017,421.5,112],["Shoreline",991,499,108],["Redmond",1148,594,115],["Bainbridge",854,626,126],["Island",883,655,67],["Sammamish",1193,659,144],["Bremerton",779,706,123],["Burien",1004,809,76],["Renton",1106,799,84],["Des Moines",1006,885,129],["Federal Way",975,977.5,149],["Lakewood",860,1130,119],["Puyallup",1034,1114,98],["Union",463,931,63],["Shelton",452,1082,84]];
const cities=[["Seattle",1002,665,107,29],["Tacoma",925,1046,100,27],["Olympia",592,1264,103,27]];
const oval=[["104",817,367],["522",1187,465],["203",1317,461],["203",1329,561],["169",1303,1045]];
const round=[["3",798,537],["3",777,647],["99",1065,747],["16",843,879],["18",1179,957],["3",631,967],["8",455,1247]];
const label=([t,x,y,w,s])=>`<text x="${x}" y="${y}" textLength="${w}" lengthAdjust="spacingAndGlyphs"${s?` style="font-size:${s}px"`:''}>${t}</text>`;
const num=(t,x,y)=>`<text x="${x}" y="${y+6}" text-anchor="middle" class="n">${t}</text>`;
const pin=(x,y)=>`<g transform="translate(${x-24},${y-77}) scale(1.92 1.875)"><path d="M12.500 .4C5.800 .4 .4 5.900 .4 12.500c0 2.400.7 4.700 1.700 6.700L12.500 40.600 22.900 19.200c1-2 1.700-4.300 1.700-6.700C24.600 5.900 19.200 .4 12.500 .4z" fill="url(#pin)" stroke="#2e6c97" stroke-width=".9"/><path d="M12.500 1.500c-6.100 0-11 5-11 11 0 2.200.6 4.200 1.600 6.200L12.500 38 21.900 18.700c1-2 1.600-4 1.600-6.200 0-6-4.900-11-11-11z" fill="none" stroke="#fff" stroke-opacity=".15"/><circle cx="12.500" cy="12.700" r="4.700" fill="#fff" stroke="#2e6c97" stroke-width=".7"/></g>`;
const us=(x,y)=>`<path transform="translate(${x},${y})" d="M-20,-17Q-13,-12 -7,-16Q-3,-18 0,-15Q3,-18 7,-16Q13,-12 20,-17L26,-12Q21,-6 25,2Q27,15 15,16Q5,15 0,18Q-5,15 -15,16Q-27,15 -25,2Q-21,-6 -26,-12Z" class="s"/>`+num("101",x,y+1.5);
const inter=(t,x,y)=>`<g transform="translate(${x},${y})"><path d="M-17,-17Q-12,-13 -8,-17Q-4,-14 0,-17Q4,-14 8,-17Q12,-13 17,-17Q21,-6 17,4Q13,13 0,19Q-13,13 -17,4Q-21,-6 -17,-17Z" fill="#3f51a8" stroke="#fff" stroke-width="1.200"/><path d="M-17,-16Q-12,-12 -8,-16Q-4,-13 0,-16Q4,-13 8,-16Q12,-12 17,-16L18,-10H-18Z" fill="#cf2532"/><path d="M-18.500,-9H18.500" stroke="#fff" stroke-width="2.200"/></g><text x="${x}" y="${y+6.500}" text-anchor="middle" class="n" style="fill:#e6e9f6;font-size:18px">${t}</text>`;

define('locker-map',`<style>
:host{display:block;position:relative;width:1270px;height:999px;overflow:hidden}
svg.map{display:block}
text{font-family:Roboto,sans-serif;font-size:26px;fill:#595959;stroke:#f4eee9;stroke-width:3.500px;stroke-opacity:.8;paint-order:stroke;stroke-linejoin:round}
.city text{font-weight:500;fill:#303030}
text.n{font-size:18.500px;font-weight:700;fill:#555;stroke:none}
.s{fill:#fff;stroke:#555;stroke-width:2}
path{stroke-linejoin:round;stroke-linecap:round}
</style>
<svg class="map" width="1270" height="999" viewBox="373 255 1270 999">
<defs>
<linearGradient id="pin" x2="0" y2="1"><stop stop-color="#3a8bca"/><stop offset="1" stop-color="#1672cc"/></linearGradient>
<filter id="coast" x="0" y="0" width="1" height="1"><feTurbulence type="fractalNoise" baseFrequency=".16" numOctaves="2" seed="4"/><feDisplacementMap in="SourceGraphic" scale="6" xChannelSelector="R" yChannelSelector="G"/></filter>
<filter id="relief" x="0" y="0" width="1" height="1" color-interpolation-filters="sRGB"><feTurbulence type="fractalNoise" baseFrequency=".02 .024" numOctaves="3" seed="11"/><feColorMatrix values="0 0 0 0 0 0 0 0 0 0 0 0 0 0 0 1 0 0 0 0"/><feDiffuseLighting surfaceScale="15" lighting-color="#fff"><feDistantLight azimuth="225" elevation="50"/></feDiffuseLighting><feComponentTransfer><feFuncR type="linear" slope=".24" intercept=".8"/><feFuncG type="linear" slope=".19" intercept=".85"/><feFuncB type="linear" slope=".24" intercept=".8"/></feComponentTransfer><feComposite operator="in" in2="SourceAlpha"/></filter>
<filter id="hills" x="-.05" y="-.05" width="1.1" height="1.1" color-interpolation-filters="sRGB"><feGaussianBlur in="SourceAlpha" stdDeviation="14" result="area"/><feTurbulence type="fractalNoise" baseFrequency=".02 .018" numOctaves="3" seed="7"/><feColorMatrix values="0 0 0 0 0 0 0 0 0 0 0 0 0 0 0 1 0 0 0 0"/><feDiffuseLighting surfaceScale="14" lighting-color="#fff"><feDistantLight azimuth="225" elevation="52"/></feDiffuseLighting><feComponentTransfer><feFuncR type="linear" slope=".3" intercept=".76"/><feFuncG type="linear" slope=".32" intercept=".74"/><feFuncB type="linear" slope=".36" intercept=".71"/></feComponentTransfer><feComposite operator="in" in2="area"/></filter>
<filter id="soft"><feGaussianBlur stdDeviation="5"/></filter><filter id="shade"><feGaussianBlur stdDeviation="3"/></filter>
</defs>
<rect x="373" y="255" width="1270" height="999" fill="#f0e9e2"/>
${tiles(forest,'fill="#cce6b6"')}
<g fill="#a5d982" opacity=".42" filter="url(#soft)"><path d="M395,300L470,270 455,350 500,430 530,520 535,640 500,650 470,520 410,450ZM470,650H540L530,760 460,640ZM1580,350L1643,330V440L1590,370ZM1570,620L1643,600V700L1580,690ZM1560,770L1643,760V850L1590,830ZM373,680H410V740L373,748Z"/></g>
<g style="mix-blend-mode:multiply"><g filter="url(#relief)">${tiles(forest,'fill="#000"')}</g></g>
<g style="mix-blend-mode:multiply" opacity=".6"><path filter="url(#hills)" d="M1400,290L1540,270 1570,330 1560,420 1500,430 1500,520 1580,550 1550,760 1500,750 1430,720 1400,560ZM1380,820L1410,930 1500,940V1050L1490,1130 1590,1140V1220H1330L1360,1110 1360,950ZM480,790L430,830 400,900 373,920V780ZM373,1080L470,1090 490,1180 373,1230ZM640,270L655,350 620,440 610,270Z"/></g>
${tiles(ridge,'fill="#a7b481" fill-opacity=".55" filter="url(#soft)"')}
${tiles(sheen,'fill="#eaf4dc" fill-opacity=".4" filter="url(#soft)"')}
<g filter="url(#coast)">${tiles(park,'fill="#b2e597"')}</g>
<g fill="#d0cfe0"><path d="M1085,315l8,-2 6,22-12,-3ZM1063,805l10,0 4,30-10,3ZM870,1010l8,-12 2,24-8,6ZM730,785l15,-15-8,16Z"/></g>
<g fill="#f2ceaa"><path d="M575,1225l7,-10 6,0 2,7 10,2-5,6-12,12-6,-10ZM449,1035h6v17h-6Z"/></g>
<g filter="url(#coast)">${tiles(water,'fill="#75cff0"')}${tiles(isle,'fill="#f0e9e2"')}${tiles(stream,'fill="none" stroke="#75cff0" stroke-width="10"')}
${tiles({B:"M285,630l68,-15v75l-25,5-5,25-12,-25-30,-10ZM182,430h18v78h-18ZM388,1415h40l-10,35ZM545,1020l50,-15 15,40-40,20Z",D:"M835,808h45v30h-45ZM860,840l20,15v30h-20ZM875,915h25v22h-25Z",E:"M390,240l80,-10-10,25-45,20ZM555,455l20,-30 45,-5-5,20Z"},'fill="#b2e597"')}</g>
<g fill="none" stroke="#5cb9df" stroke-opacity=".5" stroke-width="1.500"><path d="M862,256Q890,285 925,293Q950,320 963,400L972,510 957,590 960,610 1000,645M948,651L1000,655M885,675Q900,700 950,695Q980,690 1000,665L980,700 955,750M1008,1055L1050,1080 1080,1087" /></g>
${tiles(white,'fill="none" stroke="#fbf9f6" stroke-opacity=".85" stroke-width="6"')}
${tiles(yellow,'fill="none" stroke="#fff8e8" stroke-width="16"')}${tiles(orange,'fill="none" stroke="#fdf3ea" stroke-width="16"')}
${tiles(yellow,'fill="none" stroke="#e7c350" stroke-width="8"')}${tiles(orange,'fill="none" stroke="#f49c65" stroke-width="9"')}
<g>${places.map(label).join('')}</g><g class="city">${cities.map(label).join('')}</g>
<text x="1620" y="465" style="fill:#3d8a3a">Wi</text>
${oval.map(([t,x,y])=>`<ellipse cx="${x}" cy="${y}" rx="25.500" ry="19" class="s"/>`+num(t,x,y)).join('')}
${round.map(([t,x,y])=>`<circle cx="${x}" cy="${y}" r="19.300" class="s"/>`+num(t,x,y)).join('')}
${us(655,372)}${us(493,805)}${inter("90",1417,751)}${inter("90",1619,873)}${inter("5",749,1233)}
<ellipse cx="1609" cy="1251" rx="25" ry="18" class="s"/>${num("610",1609,1250)}
<g filter="url(#shade)" fill="#000" opacity=".35"><path d="M1064,575L1078,525Q1092,500 1106,512Q1114,530 1098,550ZM1062,545L1078,500Q1095,485 1103,500L1100,530Z"/></g>
${pin(1060,548)}${pin(1064,575)}
</svg><zoom-control></zoom-control><map-credit></map-credit>`);

define('locker-page',`<style>
:host{display:block;height:1723px;overflow:hidden;background:#fff}
main{display:flex;align-items:flex-start;padding-left:370px}
.left{width:1333px;box-sizing:border-box;padding-top:59px}
.bar{display:flex;align-items:flex-start;gap:8px;height:110px}
location-select{margin-top:8px}
locker-map,help-panel{margin-left:3px}
help-panel{margin-top:201px}
inquiry-form{margin-top:109px}
</style><top-band></top-band><main><div class="left"><div class="bar"><location-select></location-select><pill-button focused></pill-button></div><locker-map></locker-map><help-panel></help-panel></div><inquiry-form></inquiry-form></main>`);
</script>
</body>
</html>
